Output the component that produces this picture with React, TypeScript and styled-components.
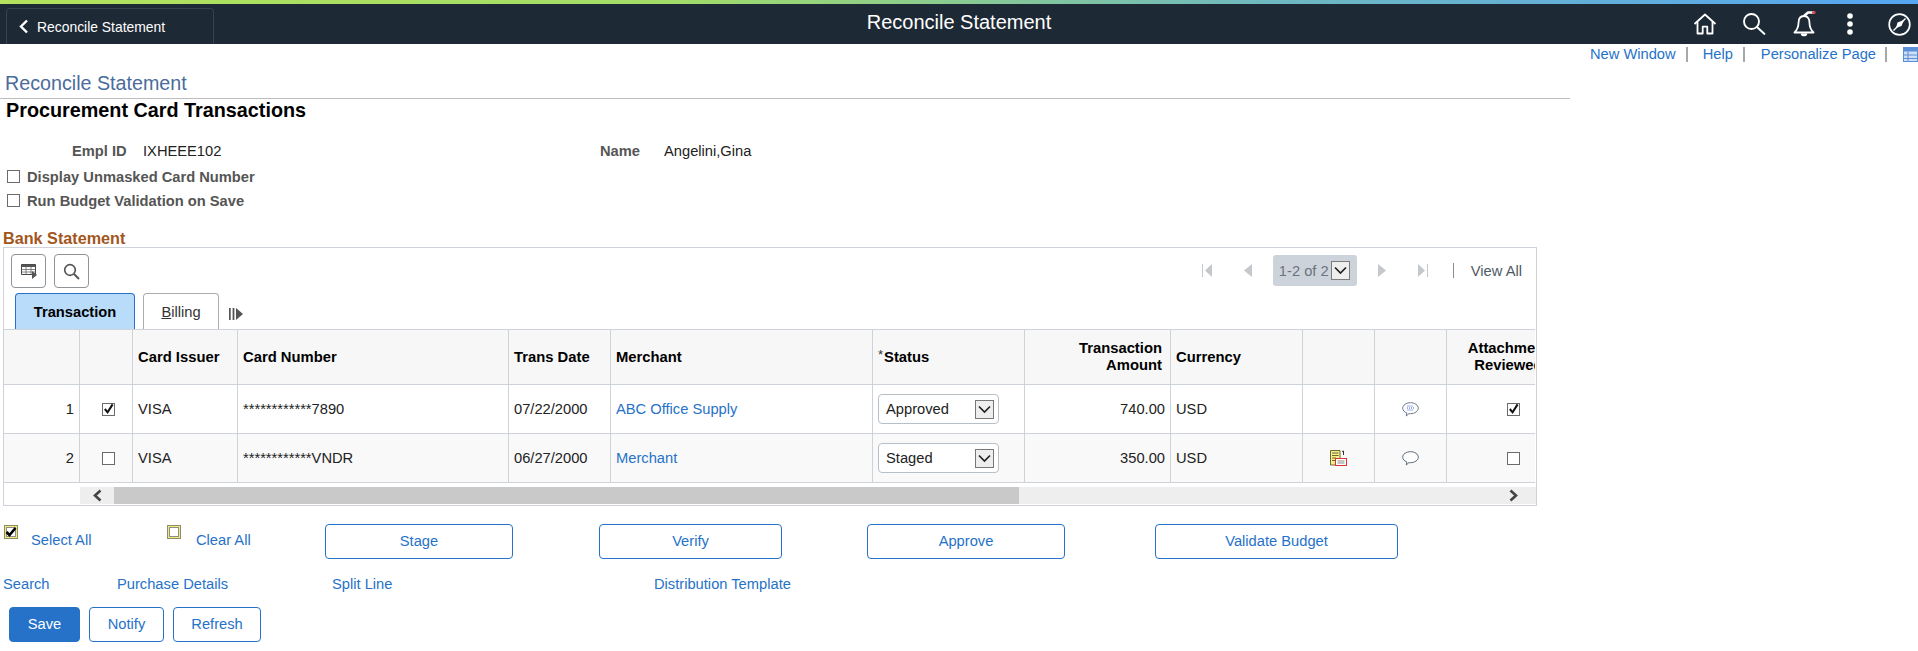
import React from "react";
import styled, { createGlobalStyle } from "styled-components";

const Global = createGlobalStyle`
  html, body { margin: 0; padding: 0; background: #fff; }
  body { font-family: "Liberation Sans", Arial, sans-serif; font-size: 14.7px; color: #000; overflow: hidden; }
  * { box-sizing: border-box; }
`;

const Page = styled.div`width: 1918px; height: 651px; overflow: hidden;`;
const Accent = styled.div`height: 4px; background: linear-gradient(90deg, #b4e25c 0%, #a2dc68 35%, #6fb8c0 66%, #55a5f2 100%);`;
const Banner = styled.header`
  height: 40px; background: #1d2935; display: grid; grid-template-columns: 1fr auto 1fr; align-items: stretch;
`;
const BackButton = styled.div`
  margin: 4px 0 0 6px; width: 208px; height: 36px; border: 1px solid #35424f; border-bottom: 0; border-radius: 4px 4px 0 0;
  display: flex; align-items: center; gap: 8px; padding-left: 11px; color: #fff; font-size: 13.9px;
`;
const BannerTitle = styled.div`color: #fff; font-size: 20px; line-height: 36px;`;
const BannerIcons = styled.div`display: flex; align-items: center; justify-content: flex-end; padding-right: 7px;`;
const IconSlot = styled.span`display: flex; margin-left: ${p => p.$l}px;`;
const NavLinks = styled.nav`
  height: 20px; display: flex; align-items: center; justify-content: flex-end; color: #2672c8; font-size: 14.7px; overflow: hidden;
`;
const NavSep = styled.span`width: 2px; height: 15px; background: #a8a8a8; margin: 0 ${p => p.$r}px 0 ${p => p.$l}px;`;
const PageTitle = styled.h1`
  margin: 0; width: 1570px; height: 35px; padding: 4px 0 0 5px; border-bottom: 1px solid #bcbcbc;
  font-size: 19.7px; font-weight: 400; line-height: 30px; color: #4a6c9c;
`;
const SubTitle = styled.h2`margin: 0; padding-left: 6px; font-size: 19.8px; line-height: 22px; font-weight: 700; color: #000;`;
const InfoRow = styled.div`
  margin-top: 19px; height: 22px; display: grid; grid-template-columns: 72px 71px 457px 64px auto; align-items: center;
`;
const InfoLabel = styled.span`font-weight: 700; color: #555; grid-column: ${p => p.$col};`;
const InfoValue = styled.span`color: #222; grid-column: ${p => p.$col};`;
const CheckRow = styled.label`
  display: flex; align-items: center; height: 24px; padding-left: 7px; gap: 7px; font-weight: 700; color: #555;
`;
const FirstCheckRow = styled(CheckRow)`margin-top: 3px;`;
const Box = styled.span`
  width: 13px; height: 13px; border: 1px solid #6b6b6b; background: #fff; display: inline-flex; align-items: center; justify-content: center; flex: none;
  vertical-align: middle; margin-top: -2px;
`;
const SectionTitle = styled.div`
  margin: 16px 0 0 3px; height: 18px; line-height: 18px; font-weight: 700; font-size: 16.2px; color: #a3561c;
`;
const GridBox = styled.section`
  margin-left: 3px; width: 1534px; height: 259px; border: 1px solid #ced3da; overflow: hidden;
`;
const GridBar = styled.div`height: 40px; padding: 6px 0 0 7px; display: flex; gap: 8px; align-items: flex-start;`;
const ToolButton = styled.button`
  width: 35px; height: 34px; border: 1px solid #8f9499; border-radius: 4px; background: #fff; display: flex; align-items: center; justify-content: center; padding: 0;
`;
const Pager = styled.div`margin-left: auto; display: flex; align-items: center; height: 31px; margin-top: 1px; color: #4d5a66;`;
const PagerBox = styled.div`
  width: 84px; height: 31px; background: #cdd3da; border-radius: 3px; display: flex; align-items: center; padding-left: 6px; color: #6a7480; gap: 2px;
`;
const PagerSelect = styled.span`
  width: 19px; height: 19px; border: 1px solid #7d7d7d; background: #eee; display: flex; align-items: center; justify-content: center; flex: none;
`;
const PagerSep = styled.span`width: 1px; height: 15px; background: #8c8c8c; margin: 0 17px 0 25px;`;
const ViewAll = styled.span`color: #4d5a66; padding-right: 14px;`;
const PagerIcon = styled.svg`display: block; margin: ${p => p.$m};`;
const Tabs = styled.div`height: 41px; padding: 5px 0 0 11px; display: flex; align-items: flex-end; gap: 8px;`;
const Tab = styled.div`
  height: 36px; width: ${p => p.$w}px; display: flex; align-items: center; justify-content: center; border-radius: 4px 4px 0 0;
  border: 1px solid ${p => (p.$active ? "#2672c8" : "#a9adb2")}; border-bottom: 0;
  background: ${p => (p.$active ? "#b9dcfb" : "#fff")}; font-weight: ${p => (p.$active ? 700 : 400)}; color: ${p => (p.$active ? "#000" : "#333")};
`;
const MoreTabs = styled.svg`align-self: center; margin: 5px 0 0 2px;`;
const TableClip = styled.div`width: 1531px; overflow: hidden;`;
const Table = styled.table`
  width: 1577px; table-layout: fixed; border-collapse: separate; border-spacing: 0; border-top: 1px solid #ced3da;
`;
const Th = styled.th`
  height: 55px; padding: 0 ${p => p.$pr ?? 5}px 0 5px; background: #f7f7f7; border-right: 1px solid #ced3da; border-bottom: 1px solid #ced3da;
  text-align: ${p => p.$align || "left"}; font-size: 14.8px; line-height: 17px; color: #000; font-weight: 700;
`;
const Required = styled.span`
  font-weight: 400; font-size: 13px; line-height: 0; position: relative; top: -3px; margin-right: 1px; color: #333;
`;
const Td = styled.td`
  height: 49px; padding: 0 5px 0 ${p => p.$pl ?? 5}px; background: ${p => (p.$odd ? "#fff" : "#f9f9f9")}; border-right: 1px solid #ced3da; border-bottom: 1px solid #ced3da;
  text-align: ${p => p.$align || "left"}; color: #222; vertical-align: middle;
`;
const CellLink = styled.span`color: #2672c8;`;
const Select = styled.div`
  width: 121px; height: 30px; border: 1px solid #b8bfc7; border-radius: 4px; background: #fff; display: flex; align-items: center; justify-content: space-between; padding: 0 4px 0 7px; color: #222;
`;
const SelectArrow = styled.span`
  width: 19px; height: 19px; border: 1px solid #777; background: #eee; display: flex; align-items: center; justify-content: center;
`;
const CenterIcon = styled.svg`display: block; margin: 0 auto;`;
const Scroll = styled.div`margin-top: 4px; height: 17px; display: flex; padding-left: 76px; width: 1532px;`;
const ScrollTrack = styled.div`flex: 1; background: #eee; display: flex; align-items: center;`;
const ScrollThumb = styled.div`width: 905px; height: 100%; background: #c9c9c9; margin: 0 auto 0 0;`;
const ScrollEnd = styled.span`width: 34px; display: flex; justify-content: center; align-items: center; flex: none;`;
const ScrollRight = styled.span`margin-right: 17px; display: flex;`;
const Actions = styled.div`margin-top: 18px; height: 35px; padding-left: 4px; display: flex; align-items: flex-start;`;
const Pick = styled.div`display: flex; width: ${p => p.$w}px; padding-top: 1px;`;
const PickLink = styled.span`color: #2672c8; margin: 8px 0 0 ${p => p.$l}px; line-height: 15px;`;
const OutlineBtn = styled.button`
  height: 35px; width: ${p => p.$w}px; margin-left: ${p => p.$l || 0}px; border: 1px solid #2672c8; border-radius: 4px; background: #fff; color: #2672c8;
  font: 14.7px "Liberation Sans", Arial, sans-serif; padding: 0 0 2px;
`;
const LinkRow = styled.div`
  margin-top: 15px; height: 20px; padding-left: 3px; display: grid; grid-template-columns: 114px 215px 322px auto; align-items: center; color: #2672c8;
`;
const Footer = styled.div`margin-top: 13px; padding-left: 9px; display: flex; gap: 9px;`;
const SaveBtn = styled.button`
  height: 35px; width: 71px; border: 1px solid #2672c8; border-radius: 4px; background: #2672c8; color: #fff; font: 14.7px "Liberation Sans", Arial, sans-serif; padding: 0 0 2px;
`;
const BlueGrid = styled.svg`margin-left: 16px; flex: none;`;

const Chevron = () => (
  <svg width="11" height="15" viewBox="0 0 11 15"><path d="M9 1.500 3 7.500l6 6" fill="none" stroke="#fff" strokeWidth="2.400" /></svg>
);
const Drop = () => (
  <svg width="13" height="9" viewBox="0 0 13 9"><path d="M1 1.500 6.500 7 12 1.500" fill="none" stroke="#222" strokeWidth="1.700" /></svg>
);
const Tick = () => (
  <svg width="12" height="12" viewBox="0 0 12 12"><path d="M2 6l3 3.600L10.500 1" fill="none" stroke="#111" strokeWidth="2.200" /></svg>
);
const HomeIcon = () => (
  <svg width="24" height="22" viewBox="0 0 24 22" fill="none" stroke="#fff" strokeWidth="1.800" strokeLinejoin="round">
    <path d="M1.500 11 12 1.500 22.500 11" /><path d="M4.500 9v11.500h5.200v-6.800h4.600v6.800h5.200V9" />
  </svg>
);
const SearchIcon = () => (
  <svg width="24" height="22" viewBox="0 0 24 22" fill="none" stroke="#fff" strokeWidth="1.900">
    <circle cx="9.500" cy="8.500" r="7.500" /><path d="M15 14l8 7.500" />
  </svg>
);
const BellIcon = () => (
  <svg width="24" height="27" viewBox="0 0 24 27" fill="none" stroke="#fff" strokeWidth="1.800" strokeLinejoin="round">
    <path d="M11 5c-4 0-5.500 3-5.500 7 0 5-2 7.500-4 9.500h19c-2-2-4-4.500-4-9.500 0-4-1.500-7-5.500-7z" /><path d="M8.500 22.500c.5 2.500 4.500 2.500 5 0" fill="#fff" />
    <path d="M11 5l4-3.500h6" stroke="#fff" strokeWidth="2.400" /><path d="M19 1.500h3.500" stroke="#e24b4b" strokeWidth="2.400" />
  </svg>
);
const DotsIcon = () => (
  <svg width="8" height="24" viewBox="0 0 8 24" fill="#fff"><circle cx="4" cy="4" r="2.800" /><circle cx="4" cy="12" r="2.800" /><circle cx="4" cy="20" r="2.800" /></svg>
);
const CompassIcon = () => (
  <svg width="23" height="23" viewBox="0 0 23 23" fill="none" stroke="#fff" strokeWidth="1.700">
    <circle cx="11.500" cy="11.500" r="10.300" /><path d="M8 15l1.500-5.500L16 7l-2.500 6z" fill="#fff" stroke="none" /><path d="M5.500 17.500 17.500 5.500" strokeWidth="1.400" />
  </svg>
);
const GridIconBlue = () => (
  <BlueGrid width="15" height="15" viewBox="0 0 15 15">
    <rect x=".5" y=".5" width="14" height="14" fill="#cfdff5" stroke="#5b8fd6" />
    <rect x="1" y="1" width="13" height="3.500" fill="#5b8fd6" />
    <path d="M1 8h13M1 11.500h13M5 4.500v10" stroke="#5b8fd6" />
  </BlueGrid>
);
const GridToolIcon = () => (
  <svg width="18" height="18" viewBox="0 0 18 18">
    <path d="M1.500 2.500h14v10h-14z" fill="#fff" stroke="#444" /><path d="M1.500 2.500h14v2.500h-14z" fill="#555" />
    <path d="M1.500 7.500h14M1.500 10h14M6 5v7.500M11 5v7.500" stroke="#666" strokeWidth=".8" /><path d="M12 9l5 4-5 4z" fill="#555" />
  </svg>
);
const FindIcon = () => (
  <svg width="17" height="17" viewBox="0 0 17 17" fill="none" stroke="#555" strokeWidth="1.700"><circle cx="7" cy="7" r="5.300" /><path d="M11 11l5 5" strokeWidth="2" /></svg>
);
const MoreIcon = () => (
  <MoreTabs width="14" height="12" viewBox="0 0 14 12"><path d="M.8 0v12M4.500 0v12" stroke="#555" strokeWidth="1.800" /><path d="M7 0l7 6-7 6z" fill="#555" /></MoreTabs>
);
const BudgetIcon = () => (
  <CenterIcon width="17" height="16" viewBox="0 0 17 16">
    <path d="M.5.500h9.500v14.500H.5z" fill="#f6ee8a" stroke="#6b6b30" /><path d="M2 3h6.500M2 5.500h6.500M2 8h4M2 10.500h4" stroke="#6b6b30" />
    <path d="M12 1.500l1.500-.5v4" stroke="#333" fill="none" /><rect x="5.500" y="8.500" width="11" height="7" fill="#fff" stroke="#e03030" /><path d="M7.500 11h7M7.500 13h7" stroke="#888" />
  </CenterIcon>
);
const CommentIcon = ({ dots }: { dots?: boolean }) => (
  <CenterIcon width="17" height="15" viewBox="0 0 17 15">
    <path d="M8.500.700c4.300 0 7.800 2.500 7.800 5.500s-3.500 5.500-7.800 5.500c-.6 0-1.100 0-1.600-.1L4.300 14l.5-3.100C2.400 10 .7 8.300.7 6.200.7 3.200 4.200.700 8.500.700z" fill="#fff" stroke={dots ? "#6d7a8c" : "#5d6b7a"} />
    {dots && <path d="M5.500 4h6M5 6h7M5.500 8h6" stroke="#3f62d0" strokeWidth="1" strokeDasharray="1 1" />}
  </CenterIcon>
);
const PickBox = ({ on }: { on?: boolean }) => (
  <svg width="14" height="14" viewBox="0 0 14 14">
    <rect x=".5" y=".5" width="13" height="13" fill="#f3ea7c" stroke="#8d8d6a" />
    <rect x="2.500" y="2.500" width="9" height="9" fill="#fff" stroke="#8d8d8d" />
    {on && <path d="M2.500 7l3 3 6-7" fill="none" stroke="#000" strokeWidth="2.600" />}
  </svg>
);

const rows = [
  { n: 1, on: true, num: "************7890", date: "07/22/2000", merchant: "ABC Office Supply", status: "Approved", amt: "740.00", budget: false, dots: true, rev: true },
  { n: 2, on: false, num: "************VNDR", date: "06/27/2000", merchant: "Merchant", status: "Staged", amt: "350.00", budget: true, dots: false, rev: false },
];
const widths = [76, 53, 105, 271, 102, 262, 152, 146, 132, 72, 72, 134];

export default function App() {
  return (
    <Page>
      <Global />
      <Accent />
      <Banner>
        <BackButton><Chevron />Reconcile Statement</BackButton>
        <BannerTitle>Reconcile Statement</BannerTitle>
        <BannerIcons>
          <IconSlot $l={0}><HomeIcon /></IconSlot>
          <IconSlot $l={25}><SearchIcon /></IconSlot>
          <IconSlot $l={27}><BellIcon /></IconSlot>
          <IconSlot $l={29}><DotsIcon /></IconSlot>
          <IconSlot $l={34}><CompassIcon /></IconSlot>
        </BannerIcons>
      </Banner>
      <NavLinks>
        New Window<NavSep $l={10} $r={15} />Help<NavSep $l={10} $r={16} />Personalize Page<NavSep $l={9} $r={0} /><GridIconBlue />
      </NavLinks>
      <PageTitle>Reconcile Statement</PageTitle>
      <SubTitle>Procurement Card Transactions</SubTitle>
      <InfoRow>
        <InfoLabel $col={2}>Empl ID</InfoLabel>
        <InfoValue $col={3}>IXHEEE102</InfoValue>
        <InfoLabel $col={4}>Name</InfoLabel>
        <InfoValue $col={5}>Angelini,Gina</InfoValue>
      </InfoRow>
      <FirstCheckRow><Box />Display Unmasked Card Number</FirstCheckRow>
      <CheckRow><Box />Run Budget Validation on Save</CheckRow>
      <SectionTitle>Bank Statement</SectionTitle>
      <GridBox>
        <GridBar>
          <ToolButton><GridToolIcon /></ToolButton>
          <ToolButton><FindIcon /></ToolButton>
          <Pager>
            <PagerIcon $m="0 32px 0 0" width="10" height="13" viewBox="0 0 10 13"><path d="M.5 0v13" stroke="#c4c8cc" /><path d="M10 0v13L3 6.500z" fill="#c4c8cc" /></PagerIcon>
            <PagerIcon $m="0 21px 0 0" width="8" height="13" viewBox="0 0 8 13"><path d="M8 0v13L0 6.500z" fill="#c4c8cc" /></PagerIcon>
            <PagerBox>1-2 of 2<PagerSelect><Drop /></PagerSelect></PagerBox>
            <PagerIcon $m="0 32px 0 21px" width="8" height="13" viewBox="0 0 8 13"><path d="M0 0v13l8-6.500z" fill="#c4c8cc" /></PagerIcon>
            <PagerIcon $m="0" width="10" height="13" viewBox="0 0 10 13"><path d="M0 0v13l7-6.500z" fill="#c4c8cc" /><path d="M9.500 0v13" stroke="#c4c8cc" /></PagerIcon>
            <PagerSep />
            <ViewAll>View All</ViewAll>
          </Pager>
        </GridBar>
        <Tabs>
          <Tab $active $w={120}>Transaction</Tab>
          <Tab $w={76}><span><u>B</u>illing</span></Tab>
          <MoreIcon />
        </Tabs>
        <TableClip>
          <Table>
            <colgroup>{widths.map((w, i) => <col key={i} style={{ width: w }} />)}</colgroup>
            <thead>
              <tr>
                <Th /><Th />
                <Th>Card Issuer</Th>
                <Th>Card Number</Th>
                <Th>Trans Date</Th>
                <Th>Merchant</Th>
                <Th><Required>*</Required>Status</Th>
                <Th $align="right" $pr={8}>Transaction<br />Amount</Th>
                <Th>Currency</Th>
                <Th /><Th />
                <Th $align="center" $pr={15}>Attachment<br />Reviewed</Th>
              </tr>
            </thead>
            <tbody>
              {rows.map(r => (
                <tr key={r.n}>
                  <Td $odd={r.n === 1} $align="right">{r.n}</Td>
                  <Td $odd={r.n === 1} $align="center" $pl={9}><Box>{r.on && <Tick />}</Box></Td>
                  <Td $odd={r.n === 1}>VISA</Td>
                  <Td $odd={r.n === 1}>{r.num}</Td>
                  <Td $odd={r.n === 1}>{r.date}</Td>
                  <Td $odd={r.n === 1}><CellLink>{r.merchant}</CellLink></Td>
                  <Td $odd={r.n === 1}><Select>{r.status}<SelectArrow><Drop /></SelectArrow></Select></Td>
                  <Td $odd={r.n === 1} $align="right">{r.amt}</Td>
                  <Td $odd={r.n === 1}>USD</Td>
                  <Td $odd={r.n === 1}>{r.budget && <BudgetIcon />}</Td>
                  <Td $odd={r.n === 1}><CommentIcon dots={r.dots} /></Td>
                  <Td $odd={r.n === 1} $align="center"><Box>{r.rev && <Tick />}</Box></Td>
                </tr>
              ))}
            </tbody>
          </Table>
        </TableClip>
        <Scroll>
          <ScrollTrack>
            <ScrollEnd>
              <svg width="10" height="13" viewBox="0 0 10 13"><path d="M8.500 1.500 3 6.500l5.500 5" fill="none" stroke="#444" strokeWidth="2.600" /></svg>
            </ScrollEnd>
            <ScrollThumb />
            <ScrollRight>
              <svg width="10" height="13" viewBox="0 0 10 13"><path d="M1.500 1.500 7 6.500l-5.500 5" fill="none" stroke="#444" strokeWidth="2.600" /></svg>
            </ScrollRight>
          </ScrollTrack>
        </Scroll>
      </GridBox>
      <Actions>
        <Pick $w={163}>
          <PickBox on />
          <PickLink $l={13}>Select All</PickLink>
        </Pick>
        <Pick $w={158}>
          <PickBox />
          <PickLink $l={15}>Clear All</PickLink>
        </Pick>
        <OutlineBtn $w={188}>Stage</OutlineBtn>
        <OutlineBtn $w={183} $l={86}>Verify</OutlineBtn>
        <OutlineBtn $w={198} $l={85}>Approve</OutlineBtn>
        <OutlineBtn $w={243} $l={90}>Validate Budget</OutlineBtn>
      </Actions>
      <LinkRow>
        <span>Search</span><span>Purchase Details</span><span>Split Line</span><span>Distribution Template</span>
      </LinkRow>
      <Footer>
        <SaveBtn>Save</SaveBtn>
        <OutlineBtn $w={75}>Notify</OutlineBtn>
        <OutlineBtn $w={88}>Refresh</OutlineBtn>
      </Footer>
    </Page>
  );
}
